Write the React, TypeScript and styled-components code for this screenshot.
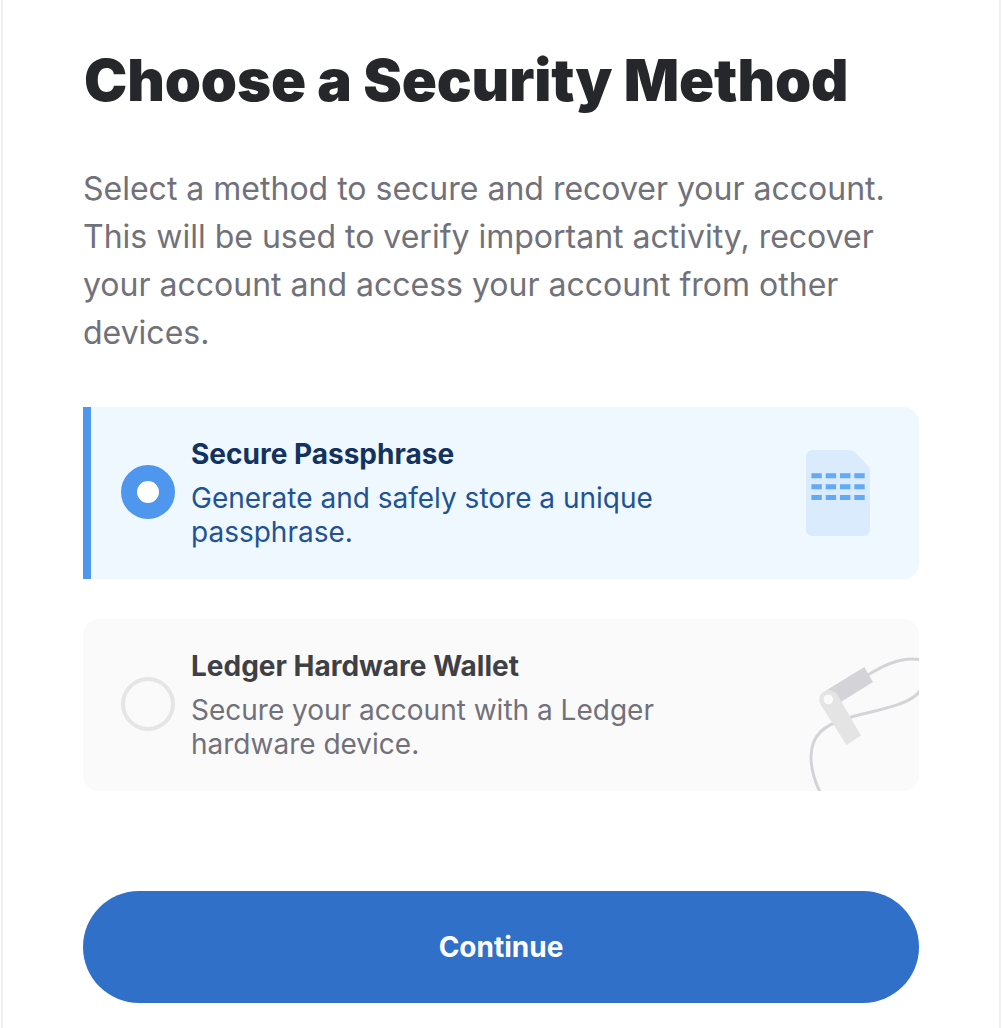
import React, { useState } from 'react';
import styled, { createGlobalStyle } from 'styled-components';

const GlobalStyle = createGlobalStyle`
  * { box-sizing: border-box; }
  body { margin: 0; background: #fff; font-family: Inter, "Liberation Sans", sans-serif; }
`;

const Panel = styled.main`
  height: 1028px;
  margin: 0 1px;
  padding: 44px 80px 0;
  border-left: 2px solid #f0f0f1;
  border-right: 2px solid #f0f0f1;
  overflow: hidden;
`;

const Title = styled.h1`
  margin: 0;
  padding-left: 1px;
  font-size: 58px;
  line-height: 72px;
  font-weight: 900;
  letter-spacing: -0.14px;
  color: #26272b;
  white-space: nowrap;
`;

const Intro = styled.p`
  margin: 49px 0 50px;
  font-size: 32px;
  line-height: 48px;
  color: #71717a;
`;

const Options = styled.div`
  display: grid;
  gap: 40px;
`;

const Option = styled.div<{ $active: boolean }>`
  display: flex;
  align-items: center;
  height: 172px;
  padding-left: ${p => (p.$active ? 30 : 38)}px;
  border-left: ${p => (p.$active ? '8px solid #4f97ee' : '0')};
  border-radius: ${p => (p.$active ? '0 16px 16px 0' : '16px')};
  background: ${p => (p.$active ? '#f0f8ff' : '#fafafa')};
  overflow: hidden;
  cursor: pointer;
`;

const Radio = styled.span<{ $active: boolean }>`
  flex: none;
  width: 54px;
  height: 54px;
  margin-bottom: 2px;
  border-radius: 50%;
  background: ${p => (p.$active ? '#fff' : 'transparent')};
  border: ${p => (p.$active ? '16px solid #4f97ee' : '4px solid #e5e5e5')};
`;

const OptionText = styled.div`
  align-self: flex-start;
  width: 500px;
  margin-left: 16px;
  padding-top: 29px;
`;

const OptionTitle = styled.h2<{ $active: boolean }>`
  margin: 0 0 9px;
  font-size: 28px;
  line-height: 36px;
  font-weight: 700;
  color: ${p => (p.$active ? '#12335f' : '#3f3f46')};
`;

const OptionBody = styled.p<{ $active: boolean }>`
  margin: 0;
  font-size: 28px;
  line-height: 34px;
  color: ${p => (p.$active ? '#205295' : '#71717a')};
`;

const Art = styled.svg`
  display: block;
  flex: none;
  width: 119px;
  height: 172px;
  margin-left: auto;
`;

const Continue = styled.button`
  display: block;
  width: 100%;
  height: 112px;
  margin-top: 100px;
  border: 0;
  border-radius: 56px;
  background: #3070c8;
  color: #fff;
  font: 700 28px/36px Inter, "Liberation Sans", sans-serif;
  cursor: pointer;
`;

const DocumentArt = () => (
  <Art viewBox="800 407 119 172">
    <path d="M812 450h38q3 0 5 2l13.500 14.500q1.500 1.500 1.500 4V530a6 6 0 0 1-6 6h-52a6 6 0 0 1-6-6v-74a6 6 0 0 1 6-6z" fill="#dbebfe" />
    {[475.8, 486.7, 497.6].map(y => (
      <path key={y} d={`M811.400 ${y}H865`} stroke="#63a9f8" strokeWidth="5" strokeDasharray="10.4 3.9" />
    ))}
  </Art>
);

const LedgerArt = () => (
  <Art viewBox="800 619 119 172">
    <path d="M868 675C890 661 908 657 921 660M921 689C913 706 870 711 848 718C824 725 811 735 811 757C811 770 815 782 820.500 793" fill="none" stroke="#d4d4d8" strokeWidth="3" />
    <path d="M826 690.500L864.300 667L873 682L840 702.500z" fill="#d4d4d8" />
    <path d="M820.500 704.500A9.500 9.500 0 0 1 837.500 695L861 735.500L846.500 745z" fill="#e4e4e4" />
    <circle cx="828.300" cy="699.500" r="4.800" fill="#fafafa" />
  </Art>
);

const methods = [
  { title: 'Secure Passphrase', body: 'Generate and safely store a unique passphrase.', Icon: DocumentArt },
  { title: 'Ledger Hardware Wallet', body: 'Secure your account with a Ledger hardware device.', Icon: LedgerArt },
];

export default function App() {
  const [selected, setSelected] = useState(0);
  return (
    <>
      <GlobalStyle />
      <Panel>
        <Title>Choose a Security Method</Title>
        <Intro>
          Select a method to secure and recover your account. This will be used to verify important
          activity, recover your account and access your account from other devices.
        </Intro>
        <Options role="radiogroup">
          {methods.map(({ title, body, Icon }, i) => (
            <Option key={title} $active={i === selected} role="radio" aria-checked={i === selected} onClick={() => setSelected(i)}>
              <Radio $active={i === selected} />
              <OptionText>
                <OptionTitle $active={i === selected}>{title}</OptionTitle>
                <OptionBody $active={i === selected}>{body}</OptionBody>
              </OptionText>
              <Icon />
            </Option>
          ))}
        </Options>
        <Continue>Continue</Continue>
      </Panel>
    </>
  );
}
